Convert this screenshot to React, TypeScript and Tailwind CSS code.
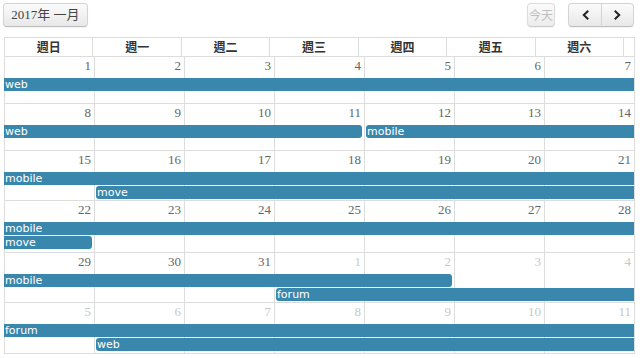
import type { ReactNode } from "react";

type CalEvent = {
  title: string;
  start: number;
  span: number;
  row: 2 | 3;
  isStart: boolean;
  isEnd: boolean;
};

type Week = {
  days: number[];
  otherFrom?: number;
  height: string;
  events: CalEvent[];
};

const colStart = ["", "col-start-1", "col-start-2", "col-start-3", "col-start-4", "col-start-5", "col-start-6", "col-start-7"];
const colSpan = ["", "col-span-1", "col-span-2", "col-span-3", "col-span-4", "col-span-5", "col-span-6", "col-span-7"];
const rowStart = { 2: "row-start-2", 3: "row-start-3" };

const headers = ["週日", "週一", "週二", "週三", "週四", "週五", "週六"];

const weeks: Week[] = [
  {
    days: [1, 2, 3, 4, 5, 6, 7],
    height: "h-[47px]",
    events: [{ title: "web", start: 1, span: 7, row: 2, isStart: false, isEnd: false }],
  },
  {
    days: [8, 9, 10, 11, 12, 13, 14],
    height: "h-[47px]",
    events: [
      { title: "web", start: 1, span: 4, row: 2, isStart: false, isEnd: true },
      { title: "mobile", start: 5, span: 3, row: 2, isStart: true, isEnd: false },
    ],
  },
  {
    days: [15, 16, 17, 18, 19, 20, 21],
    height: "h-[50px]",
    events: [
      { title: "mobile", start: 1, span: 7, row: 2, isStart: false, isEnd: false },
      { title: "move", start: 2, span: 6, row: 3, isStart: true, isEnd: false },
    ],
  },
  {
    days: [22, 23, 24, 25, 26, 27, 28],
    height: "h-[52px]",
    events: [
      { title: "mobile", start: 1, span: 7, row: 2, isStart: false, isEnd: false },
      { title: "move", start: 1, span: 1, row: 3, isStart: false, isEnd: true },
    ],
  },
  {
    days: [29, 30, 31, 1, 2, 3, 4],
    otherFrom: 3,
    height: "h-[50px]",
    events: [
      { title: "mobile", start: 1, span: 5, row: 2, isStart: false, isEnd: true },
      { title: "forum", start: 4, span: 4, row: 3, isStart: true, isEnd: false },
    ],
  },
  {
    days: [5, 6, 7, 8, 9, 10, 11],
    otherFrom: 0,
    height: "h-[51px]",
    events: [
      { title: "forum", start: 1, span: 7, row: 2, isStart: false, isEnd: false },
      { title: "web", start: 2, span: 6, row: 3, isStart: true, isEnd: false },
    ],
  },
];

const serif = "font-['Liberation_Serif','Noto_Sans_CJK_TC',serif]";

function ToolButton({ className, children }: { className?: string; children: ReactNode }) {
  return (
    <div
      className={`flex h-[24px] items-center justify-center border border-[#d4d4d4] border-b-[#bdbdbd] bg-gradient-to-b from-[#fbfbfb] to-[#e8e8e8] shadow-[0_1px_1px_rgba(0,0,0,0.05)] ${className ?? ""}`}
    >
      {children}
    </div>
  );
}

function Chevron({ dir }: { dir: "left" | "right" }) {
  return (
    <svg width="7" height="10" viewBox="0 0 7 10" fill="none">
      <polyline
        points={dir === "left" ? "5.5,1.5 1.8,5 5.5,8.5" : "1.5,1.5 5.2,5 1.5,8.5"}
        stroke="#222"
        strokeWidth="2"
        strokeLinecap="square"
      />
    </svg>
  );
}

function EventBar({ ev }: { ev: CalEvent }) {
  const ends = `${ev.isStart ? "ml-[2px] rounded-l-[3px]" : ""} ${ev.isEnd ? "mr-[2px] rounded-r-[3px]" : ""}`;
  return (
    <div
      className={`${colStart[ev.start]} ${colSpan[ev.span]} ${rowStart[ev.row]} h-[13px] overflow-hidden bg-[#3a87ad] pl-[1px] font-['DejaVu_Sans',sans-serif] text-[11px] leading-[13px] text-white ${ends}`}
    >
      {ev.title}
    </div>
  );
}

function WeekRow({ week }: { week: Week }) {
  return (
    <div
      className={`grid w-[631px] grid-cols-[repeat(7,90px)] grid-rows-[21px_14px_14px_1fr] border-r border-b border-[#ddd] ${week.height}`}
    >
      {week.days.map((n, i) => {
        const other = week.otherFrom !== undefined && i >= week.otherFrom;
        return (
          <div
            key={i}
            className={`${colStart[i + 1]} row-start-1 row-span-4 border-l border-[#ddd] pr-[3px] pt-[1px] text-right ${serif} text-[13px] leading-[16px] ${other ? "text-[#c8c8c8]" : "text-[#666]"}`}
          >
            {n}
          </div>
        );
      })}
      {week.events.map((ev, i) => (
        <EventBar key={i} ev={ev} />
      ))}
    </div>
  );
}

export default function App() {
  return (
    <div className="h-[358px] w-[640px] overflow-hidden bg-white">
      <div className="flex items-start justify-between pl-[3px] pr-[6px] pt-[3px]">
        <ToolButton className={`w-[85px] rounded-[4px] ${serif} text-[13px] text-[#444]`}>
          2017年 一月
        </ToolButton>
        <div className="flex">
          <ToolButton className="w-[28px] rounded-[4px] font-['Noto_Sans_CJK_TC',sans-serif] text-[12px] text-[#b0b0b0] opacity-80">
            今天
          </ToolButton>
          <div className="ml-[13px] flex">
            <ToolButton className="w-[34px] rounded-l-[4px]">
              <Chevron dir="left" />
            </ToolButton>
            <ToolButton className="-ml-px w-[33px] rounded-r-[4px]">
              <Chevron dir="right" />
            </ToolButton>
          </div>
        </div>
      </div>

      <div className="ml-[4px] mt-[10px]">
        <div className="grid h-[20px] w-[631px] grid-cols-[repeat(7,1fr)_11px] border-t border-r border-b border-[#ddd]">
          {headers.map((h) => (
            <div
              key={h}
              className="flex items-center justify-center border-l border-[#ddd] font-['Noto_Sans_CJK_TC',sans-serif] text-[12px] font-bold text-[#333]"
            >
              {h}
            </div>
          ))}
          <div className="border-l border-[#ddd]" />
        </div>
        {weeks.map((w, i) => (
          <WeekRow key={i} week={w} />
        ))}
      </div>
    </div>
  );
}
